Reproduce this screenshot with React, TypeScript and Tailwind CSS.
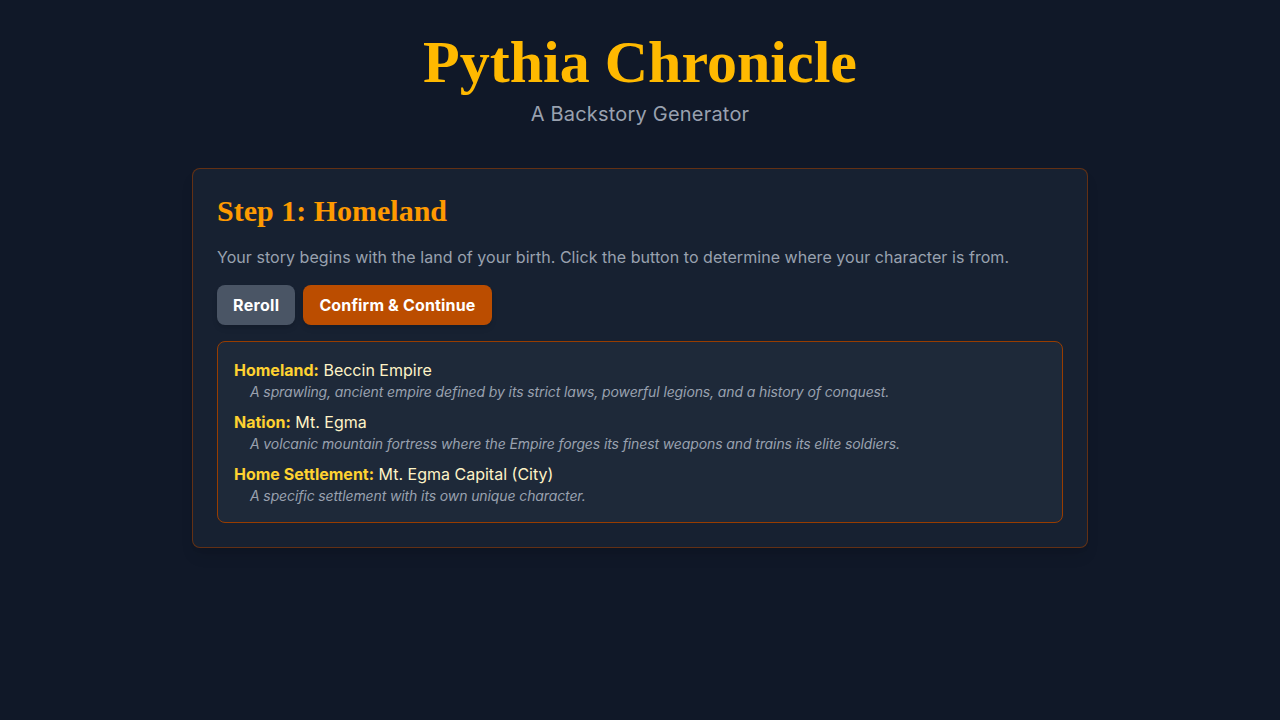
import { useState } from "react";

const serif = { fontFamily: '"Liberation Serif", "DejaVu Serif", serif' };

const results = [
  {
    label: "Homeland:",
    value: "Beccin Empire",
    desc: "A sprawling, ancient empire defined by its strict laws, powerful legions, and a history of conquest.",
  },
  {
    label: "Nation:",
    value: "Mt. Egma",
    desc: "A volcanic mountain fortress where the Empire forges its finest weapons and trains its elite soldiers.",
  },
  {
    label: "Home Settlement:",
    value: "Mt. Egma Capital (City)",
    desc: "A specific settlement with its own unique character.",
  },
];

export default function App() {
  const [step] = useState(1);

  return (
    <main
      className="min-h-screen bg-gray-900 px-4 pt-8"
      style={{ fontFamily: 'Inter, "Noto Sans", sans-serif' }}
    >
      {/* header */}
      <header className="text-center mb-10">
        <h1
          className="text-6xl leading-none font-bold text-amber-400 mb-2"
          style={serif}
        >
          Pythia Chronicle
        </h1>
        <p className="text-xl text-gray-400 tracking-[0.01em]">
          A Backstory Generator
        </p>
      </header>

      {/* step card */}
      <section className="max-w-4xl mx-auto bg-gray-800/50 border border-amber-800/60 rounded-lg p-6 shadow-lg">
        <h2 className="text-3xl font-bold text-amber-500 mb-4" style={serif}>
          Step {step}: Homeland
        </h2>
        <p className="text-gray-400 mb-4 tracking-[0.003em]">
          Your story begins with the land of your birth. Click the button to
          determine where your character is from.
        </p>

        <div className="flex gap-2 mb-4">
          <button className="bg-gray-600 text-white font-bold px-4 py-2 rounded-lg shadow-md tracking-[0.02em]">
            Reroll
          </button>
          <button className="bg-amber-700 text-white font-bold px-4 py-2 rounded-lg shadow-md tracking-[0.01em]">
            Confirm &amp; Continue
          </button>
        </div>

        <div className="bg-gray-800 border border-amber-800 rounded-lg p-4 space-y-2">
          {results.map((r) => (
            <div key={r.label}>
              <p>
                <span className="font-bold text-amber-300">{r.label}</span>{" "}
                <span className="text-amber-100">{r.value}</span>
              </p>
              <p className="text-sm italic text-gray-400 ml-4 tracking-[-0.008em]">
                {r.desc}
              </p>
            </div>
          ))}
        </div>
      </section>
    </main>
  );
}
